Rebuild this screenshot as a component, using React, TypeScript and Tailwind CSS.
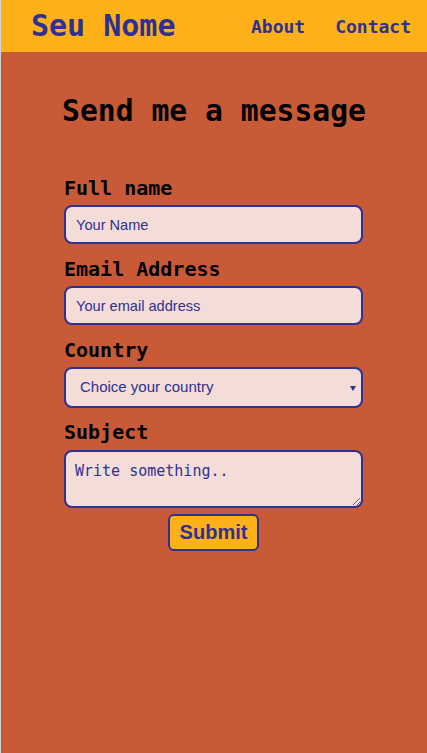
export default function App() {
  const mono = "font-['DejaVu_Sans_Mono',monospace]";
  const fieldBox =
    "block w-full border-2 border-[#2e3192] rounded-[8px] bg-[#f4ddd8] text-[#2e3192] outline-none";

  return (
    <div className="min-h-screen border-l border-[#cfd3d6] bg-[#c95a37]">
      {/* Top bar */}
      <header className="flex h-[52px] items-center justify-between bg-[#fdb017] pl-[30px] pr-[16px]">
        <span className={`${mono} text-[30px] font-bold text-[#2e3192] leading-none`}>Seu Nome</span>
        <nav className={`${mono} flex gap-[30px] text-[18px] font-bold text-[#2e3192]`}>
          <a href="#">About</a>
          <a href="#">Contact</a>
        </nav>
      </header>

      {/* Contact form */}
      <main className="flex flex-col items-center">
        <h1 className={`${mono} mt-[41px] text-[29.7px] font-bold leading-[36px] text-black`}>
          Send me a message
        </h1>

        <form className="mt-[47px] w-[300px] pr-[1px]" onSubmit={(e) => e.preventDefault()}>
          <label className={`${mono} block text-[20px] font-bold leading-[24px] text-black`}>Full name</label>
          <input
            type="text"
            placeholder="Your Name"
            className={`${fieldBox} mt-[5px] h-[39px] px-[10px] font-['Liberation_Sans',Arial,sans-serif] text-[14.6px] placeholder:text-[#2e3192]`}
          />

          <label className={`${mono} mt-[13px] block text-[20px] font-bold leading-[24px] text-black`}>
            Email Address
          </label>
          <input
            type="email"
            placeholder="Your email address"
            className={`${fieldBox} mt-[5px] h-[39px] px-[10px] font-['Liberation_Sans',Arial,sans-serif] text-[14.6px] placeholder:text-[#2e3192]`}
          />

          <label className={`${mono} mt-[13px] block text-[20px] font-bold leading-[24px] text-black`}>Country</label>
          <div className="relative mt-[5px]">
            <select
              defaultValue=""
              className={`${fieldBox} h-[41px] appearance-none pl-[14px] pr-[24px] font-['Liberation_Sans',Arial,sans-serif] text-[15px]`}
            >
              <option value="">Choice your country</option>
              <option value="br">Brasil</option>
              <option value="pt">Portugal</option>
            </select>
            <span className="pointer-events-none absolute right-[7px] top-[19px] h-0 w-0 border-x-[3px] border-t-[5px] border-x-transparent border-t-[#2e3192]" />
          </div>

          <label className={`${mono} mt-[12px] block text-[20px] font-bold leading-[24px] text-black`}>Subject</label>
          <textarea
            placeholder="Write something.."
            className={`${fieldBox} ${mono} mt-[6px] h-[58px] px-[9px] pt-[10px] pb-[4px] text-[15px] leading-[18px] placeholder:text-[#2e3192]`}
          />

          <div className="flex justify-center">
            <button
              type="submit"
              className="mt-[6px] rounded-[6px] border-2 border-[#2e3192] bg-[#fdb017] px-[10px] py-[5px] font-['Liberation_Sans',Arial,sans-serif] text-[20px] font-bold leading-[23px] text-[#2e3192]"
            >
              Submit
            </button>
          </div>
        </form>
      </main>
    </div>
  );
}
